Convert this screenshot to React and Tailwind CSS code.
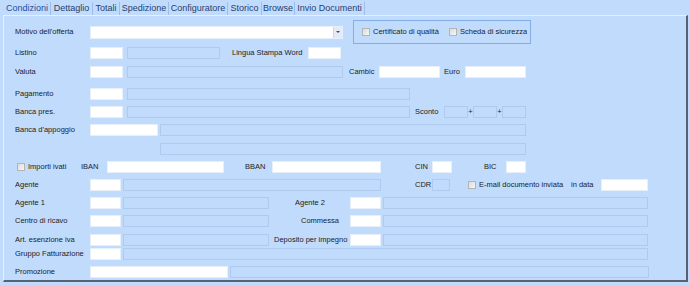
import React from "react";

const tabs = [
  { label: "Condizioni", w: "w-[47px]", active: true },
  { label: "Dettaglio", w: "w-[42px]" },
  { label: "Totali", w: "w-[27px]" },
  { label: "Spedizione", w: "w-[49px]" },
  { label: "Configuratore", w: "w-[59px]" },
  { label: "Storico", w: "w-[34px]" },
  { label: "Browse", w: "w-[33px]" },
  { label: "Invio Documenti", w: "w-[70px]" },
];

const Box = ({ className = "" }) => (
  <div className={`h-[12px] shrink-0 bg-white border border-[#e6effa] ${className}`} />
);

const Dis = ({ className = "" }) => (
  <div className={`h-[12px] shrink-0 border border-[#aecaee] ${className}`} />
);

const Label = ({ children, className = "" }) => (
  <span className={`shrink-0 whitespace-nowrap overflow-hidden text-[7.5px] leading-none text-[#222] ${className}`}>
    {children}
  </span>
);

const Check = ({ className = "" }) => (
  <div className={`w-[8px] h-[8px] shrink-0 border border-[#b4b4b4] bg-gradient-to-br from-[#dcdcdc] to-[#f6f6f6] ${className}`} />
);

const Row = ({ children, className = "" }) => (
  <div className={`flex items-center h-[12px] ${className}`}>{children}</div>
);

export default function App() {
  return (
    <div className="w-[690px] h-[285px] overflow-hidden bg-[#c1dbfd] font-['Liberation_Sans',Arial,sans-serif]">
      {/* tab strip */}
      <div className="flex h-[15px] pl-[4px] pt-[2px]">
        {tabs.map((t) => (
          <div
            key={t.label}
            className={`${t.w} h-[13px] shrink-0 flex items-center justify-center border-r border-[#9fbde6] text-[9px] leading-none whitespace-nowrap ${
              t.active ? "text-[#1d4f9c]" : "text-[#24406e]"
            }`}
          >
            {t.label}
          </div>
        ))}
      </div>

      {/* panel */}
      <div className="ml-[3px] w-[685px] h-[267px] border-t border-l border-[#e4f0ff] border-r-2 border-b-2 border-r-[#596274] border-b-[#596274] pl-[11px] pt-[4px]">
        {/* row 1 */}
        <div className="flex items-center h-[24px]">
          <Label className="w-[75px]">Motivo dell'offerta</Label>
          <div className="w-[253px] h-[13px] shrink-0 bg-white border border-[#e6effa] flex justify-end">
            <div className="w-[9px] h-full bg-[#e3ebf7] border-l border-[#c9d8ee] flex items-center justify-center">
              <div className="w-0 h-0 border-l-[2px] border-r-[2px] border-t-[2px] border-l-transparent border-r-transparent border-t-[#2d4f86]" />
            </div>
          </div>
          <div className="ml-[10px] w-[178px] h-[24px] shrink-0 border border-[#82ade6] flex items-center pl-[8px]">
            <Check />
            <Label className="ml-[3px] w-[76px]">Certificato di qualità</Label>
            <Check />
            <Label className="ml-[3px]">Scheda di sicurezza</Label>
          </div>
        </div>

        {/* row 2 */}
        <Row className="mt-[3px]">
          <Label className="w-[75px]">Listino</Label>
          <Box className="w-[33px]" />
          <Dis className="ml-[4px] w-[93px]" />
          <Label className="ml-[12px] w-[76px]">Lingua Stampa Word</Label>
          <Box className="w-[33px]" />
        </Row>

        {/* row 3 */}
        <Row className="mt-[7px]">
          <Label className="w-[75px]">Valuta</Label>
          <Box className="w-[33px]" />
          <Dis className="ml-[4px] w-[216px]" />
          <Label className="ml-[6px] w-[30px]">Cambic</Label>
          <Box className="w-[61px]" />
          <Label className="ml-[4px] w-[21px]">Euro</Label>
          <Box className="w-[61px]" />
        </Row>

        {/* row 4 */}
        <Row className="mt-[10px]">
          <Label className="w-[75px]">Pagamento</Label>
          <Box className="w-[33px]" />
          <Dis className="ml-[4px] w-[283px]" />
        </Row>

        {/* row 5 */}
        <Row className="mt-[6px]">
          <Label className="w-[75px]">Banca pres.</Label>
          <Box className="w-[33px]" />
          <Dis className="ml-[4px] w-[283px]" />
          <Label className="ml-[5px] w-[29px]">Sconto</Label>
          <Dis className="w-[24px]" />
          <Label className="w-[5px] text-center">+</Label>
          <Dis className="w-[24px]" />
          <Label className="w-[5px] text-center">+</Label>
          <Dis className="w-[24px]" />
        </Row>

        {/* row 6 */}
        <Row className="mt-[6px]">
          <Label className="w-[75px]">Banca d'appoggio</Label>
          <Box className="w-[68px]" />
          <Dis className="ml-[2px] w-[366px]" />
        </Row>

        {/* row 7 */}
        <Row className="mt-[7px]">
          <Dis className="ml-[145px] w-[366px]" />
        </Row>

        {/* row 8 */}
        <Row className="mt-[6px]">
          <Check className="ml-[2px]" />
          <Label className="ml-[3px] w-[53px]">Importi ivati</Label>
          <Label className="w-[26px]">IBAN</Label>
          <Box className="w-[117px]" />
          <Label className="ml-[21px] w-[27px]">BBAN</Label>
          <Box className="w-[109px]" />
          <Label className="ml-[34px] w-[17px]">CIN</Label>
          <Box className="w-[20px]" />
          <Label className="ml-[32px] w-[22px]">BIC</Label>
          <Box className="w-[20px]" />
        </Row>

        {/* row 9 */}
        <Row className="mt-[6px]">
          <Label className="w-[75px]">Agente</Label>
          <Box className="w-[31px]" />
          <Dis className="ml-[2px] w-[258px]" />
          <Label className="ml-[34px] w-[17px]">CDR</Label>
          <Dis className="w-[18px]" />
          <Check className="ml-[18px]" />
          <Label className="ml-[3px] w-[92px]">E-mail documento inviata</Label>
          <Label className="w-[30px]">in data</Label>
          <Box className="w-[47px]" />
        </Row>

        {/* row 10 */}
        <Row className="mt-[6px]">
          <Label className="w-[75px]">Agente 1</Label>
          <Box className="w-[31px]" />
          <Dis className="ml-[2px] w-[146px]" />
          <Label className="ml-[26px] w-[55px]">Agente 2</Label>
          <Box className="w-[31px]" />
          <Dis className="ml-[2px] w-[265px]" />
        </Row>

        {/* row 11 */}
        <Row className="mt-[6px]">
          <Label className="w-[75px]">Centro di ricavo</Label>
          <Box className="w-[31px]" />
          <Dis className="ml-[2px] w-[146px]" />
          <Label className="ml-[32px] w-[49px]">Commessa</Label>
          <Box className="w-[31px]" />
          <Dis className="ml-[2px] w-[265px]" />
        </Row>

        {/* row 12 */}
        <Row className="mt-[7px]">
          <Label className="w-[75px]">Art. esenzione iva</Label>
          <Box className="w-[31px]" />
          <Dis className="ml-[2px] w-[146px]" />
          <Label className="ml-[5px] w-[76px]">Deposito per impegno</Label>
          <Box className="w-[31px]" />
          <Dis className="ml-[2px] w-[265px]" />
        </Row>

        {/* row 13 */}
        <Row className="mt-[2px]">
          <Label className="w-[70px]">Gruppo Fatturazione</Label>
          <Box className="ml-[5px] w-[31px]" />
          <Dis className="ml-[2px] w-[525px]" />
        </Row>

        {/* row 14 */}
        <Row className="mt-[6px]">
          <Label className="w-[75px]">Promozione</Label>
          <Box className="w-[138px]" />
          <Dis className="ml-[2px] w-[419px]" />
        </Row>
      </div>
    </div>
  );
}
